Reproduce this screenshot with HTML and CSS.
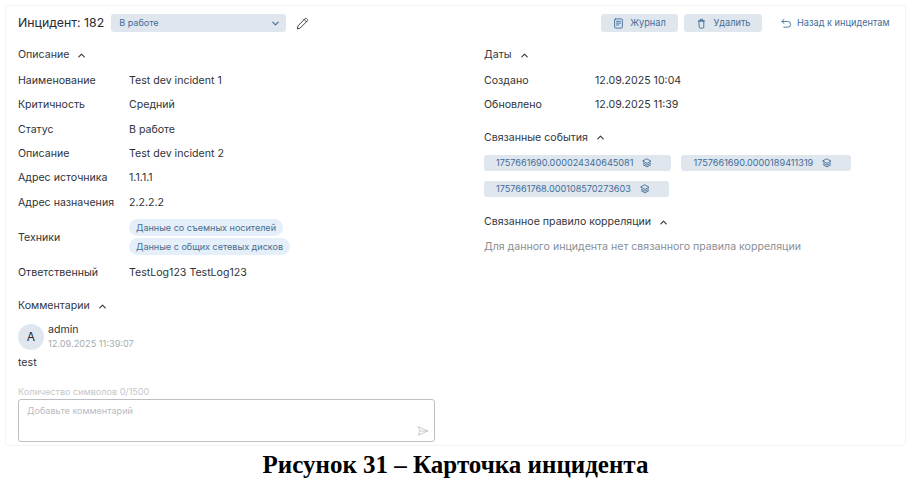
FILE: index.html
```html
<!DOCTYPE html>
<html lang="ru">
<head>
<meta charset="utf-8">
<title>Карточка инцидента</title>
<link rel="stylesheet" href="styles.css">
</head>
<body>
<main class="card">
  <header class="top">
    <h1 class="title">Инцидент: 182</h1>
    <div class="select"><span>В работе</span>
      <svg class="ic8" viewBox="0 0 10 10"><path d="M2 3.5 5 6.5 8 3.5"/></svg>
    </div>
    <svg class="pencil" viewBox="0 0 14 14"><path d="M1.5 12.5 2.3 9.3 9.9 1.7a1 1 0 0 1 1.4 0l1 1a1 1 0 0 1 0 1.4L4.7 11.7Z M8.8 2.8l2.4 2.4"/></svg>
    <div class="spacer"></div>
    <button class="btn btn-log">
      <svg class="ic12" viewBox="0 0 12 12"><rect x="1.8" y="1" width="8.4" height="10" rx="1"/><path d="M3.8 3.6h4.4M3.8 5.6h4.4M3.8 7.6h2.6"/></svg>Журнал</button>
    <button class="btn btn-del">
      <svg class="ic12" viewBox="0 0 12 12"><path d="M3.5 3.2h5v6.8a1 1 0 0 1-1 1h-3a1 1 0 0 1-1-1ZM2.6 3.2h6.8M4.8 3V1.4h2.4V3"/></svg>Удалить</button>
    <a class="back">
      <svg class="ic12" viewBox="0 0 12 12"><path d="M3.2 1.6 1 3.8l2.2 2M1 3.8h6.4a3 3 0 0 1 0 6.2H3"/></svg>Назад к инцидентам</a>
  </header>

  <div class="cols">
    <section class="col">
      <h2 class="head">Описание <svg class="ic8" viewBox="0 0 10 10"><path d="M2 6.5 5 3.5 8 6.5"/></svg></h2>
      <div class="rows">
        <div class="row"><span class="k">Наименование</span><span>Test dev incident 1</span></div>
        <div class="row"><span class="k">Критичность</span><span>Средний</span></div>
        <div class="row"><span class="k">Статус</span><span>В работе</span></div>
        <div class="row"><span class="k">Описание</span><span>Test dev incident 2</span></div>
        <div class="row"><span class="k">Адрес источника</span><span>1.1.1.1</span></div>
        <div class="row"><span class="k">Адрес назначения</span><span>2.2.2.2</span></div>
        <div class="row row-tall"><span class="k">Техники</span>
          <div class="pills"><span class="pill">Данные со съемных носителей</span><span class="pill">Данные с общих сетевых дисков</span></div>
        </div>
        <div class="row"><span class="k">Ответственный</span><span>TestLog123 TestLog123</span></div>
      </div>
      <h2 class="head head-comments">Комментарии <svg class="ic8" viewBox="0 0 10 10"><path d="M2 6.5 5 3.5 8 6.5"/></svg></h2>
      <div class="author">
        <div class="avatar">A</div>
        <div class="who"><div>admin</div><div class="date">12.09.2025 11:39:07</div></div>
      </div>
      <p class="msg">test</p>
      <div class="count">Количество символов 0/1500</div>
      <div class="input"><span>Добавьте комментарий</span>
        <svg class="send" viewBox="0 0 14 14"><path d="M1.5 2 12.5 7 1.5 12 3.4 7ZM3.4 7h9"/></svg>
      </div>
    </section>

    <section class="col">
      <h2 class="head">Даты <svg class="ic8" viewBox="0 0 10 10"><path d="M2 6.5 5 3.5 8 6.5"/></svg></h2>
      <div class="rows">
        <div class="row"><span class="k">Создано</span><span>12.09.2025 10:04</span></div>
        <div class="row"><span class="k">Обновлено</span><span>12.09.2025 11:39</span></div>
      </div>
      <h2 class="head head-events">Связанные события <svg class="ic8" viewBox="0 0 10 10"><path d="M2 6.5 5 3.5 8 6.5"/></svg></h2>
      <div class="events">
        <span class="event">1757661690.000024340645081 <svg class="ic10" viewBox="0 0 10 10"><path d="M5 1 9 3.2 5 5.4 1 3.2ZM1.4 5.2 5 7.2 8.6 5.2M1.4 6.8 5 8.9 8.6 6.8"/></svg></span>
        <span class="event">1757661690.0000189411319 <svg class="ic10" viewBox="0 0 10 10"><path d="M5 1 9 3.2 5 5.4 1 3.2ZM1.4 5.2 5 7.2 8.6 5.2M1.4 6.8 5 8.9 8.6 6.8"/></svg></span>
        <span class="event">1757661768.000108570273603 <svg class="ic10" viewBox="0 0 10 10"><path d="M5 1 9 3.2 5 5.4 1 3.2ZM1.4 5.2 5 7.2 8.6 5.2M1.4 6.8 5 8.9 8.6 6.8"/></svg></span>
      </div>
      <h2 class="head head-rule">Связанное правило корреляции <svg class="ic8" viewBox="0 0 10 10"><path d="M2 6.5 5 3.5 8 6.5"/></svg></h2>
      <p class="none">Для данного инцидента нет связанного правила корреляции</p>
    </section>
  </div>
</main>
<p class="caption">Рисунок 31 – Карточка инцидента</p>
</body>
</html>
```
FILE: styles.css
```css
* { box-sizing: border-box; }
html, body { margin: 0; background: #fff; }
body {
  width: 911px; height: 480px; overflow: hidden;
  padding: 5px 5px 0;
  font: 10.6px/16px Inter, "Noto Sans", sans-serif;
  color: #2f3339;
}
svg { fill: none; stroke: currentColor; stroke-linecap: round; stroke-linejoin: round; flex: none; }
.card {
  height: 441px;
  padding: 8px 12px 0;
  border: 1px solid #f3f4f6;
  border-radius: 3px;
}
.top { display: flex; align-items: center; height: 18px; }
.title { margin: 0 7px 0 0; font-size: 12.3px; font-weight: 400; line-height: 18px; color: #26292e; }
.select {
  width: 175px; height: 18px; padding: 0 6px 0 8px;
  display: flex; align-items: center; justify-content: space-between;
  background: #dfe6ee; border-radius: 3px;
  font-size: 9.1px; color: #3f6d99;
}
.ic8 { width: 9px; height: 9px; stroke-width: 1.3; }
.pencil { width: 13px; height: 13px; margin-left: 10px; stroke: #33373d; stroke-width: 1; }
.spacer { flex: 1; }
.btn {
  height: 18px; padding: 0; border: 0; border-radius: 3px;
  display: flex; align-items: center; justify-content: center; gap: 6px;
  background: #dfe6ee; color: #3f6d99;
  font: 9.2px/16px Inter, sans-serif;
}
.btn-log { width: 77px; margin-right: 6px; }
.btn-del { width: 78px; gap: 7px; margin-right: 19px; }
.ic12 { width: 11px; height: 11px; stroke-width: 1; }
.back { display: flex; align-items: center; gap: 5px; width: 108px; margin-right: 4px; color: #3f6d99; font-size: 9.2px; white-space: nowrap; }

.cols { display: grid; grid-template-columns: 417px 1fr; column-gap: 49px; margin-top: 15px; }
.col { min-width: 0; }
.head {
  margin: 0; height: 16px;
  display: flex; align-items: center; gap: 8px;
  font-size: 10.6px; font-weight: 400; color: #33373d;
}
.rows { margin-top: 6px; }
.row { display: grid; grid-template-columns: 111px 1fr; align-items: center; height: 24.3px; }
.row-tall { height: 46px; }
.pills { display: flex; flex-direction: column; align-items: flex-start; gap: 2px; margin-bottom: 2px; }
.pill {
  padding: 0 7px; height: 17px; line-height: 17px;
  background: #e4eff9; border-radius: 9px;
  font-size: 9.05px; color: #4a6d8f;
}
.head-comments { margin-top: 13px; }
.author { display: flex; align-items: center; gap: 4px; margin-top: 8px; }
.avatar {
  width: 26px; height: 26px; border-radius: 50%;
  display: flex; align-items: center; justify-content: center;
  background: #dfe6ee; font-size: 12px; color: #26292e;
}
.who { line-height: 14px; padding-top: 1px; }
.date { font-size: 9.2px; color: #a7abb2; }
.msg { margin: 4px 0 0; }
.count { margin-top: 13px; font-size: 9.1px; line-height: 15px; color: #c4c7cc; }
.input {
  position: relative; height: 43px;
  padding: 3px 8px;
  border: 1px solid #bdbfc3; border-radius: 3px;
  font-size: 9.1px; color: #b9bcc2;
}
.send { position: absolute; right: 5px; bottom: 4px; width: 12px; height: 12px; stroke: #b9bcc2; stroke-width: .9; }

.head-events { margin-top: 12px; }
.events { display: flex; flex-wrap: wrap; gap: 9.5px 10px; margin-top: 9px; }
.event {
  height: 16.5px; padding: 0 19px 0 12px;
  display: inline-flex; align-items: center; gap: 9px;
  background: #dfe6ee; border-radius: 3px;
  font-size: 9.15px; color: #3f6d99;
}
.ic10 { width: 10px; height: 10px; stroke-width: .9; }
.head-rule { margin-top: 17px; }
.none { margin: 9px 0 0; color: #8a8e95; }

.caption {
  margin: 5px 0 0; text-align: center;
  font: 700 25px/27px "Liberation Serif", serif; color: #000;
}
```
